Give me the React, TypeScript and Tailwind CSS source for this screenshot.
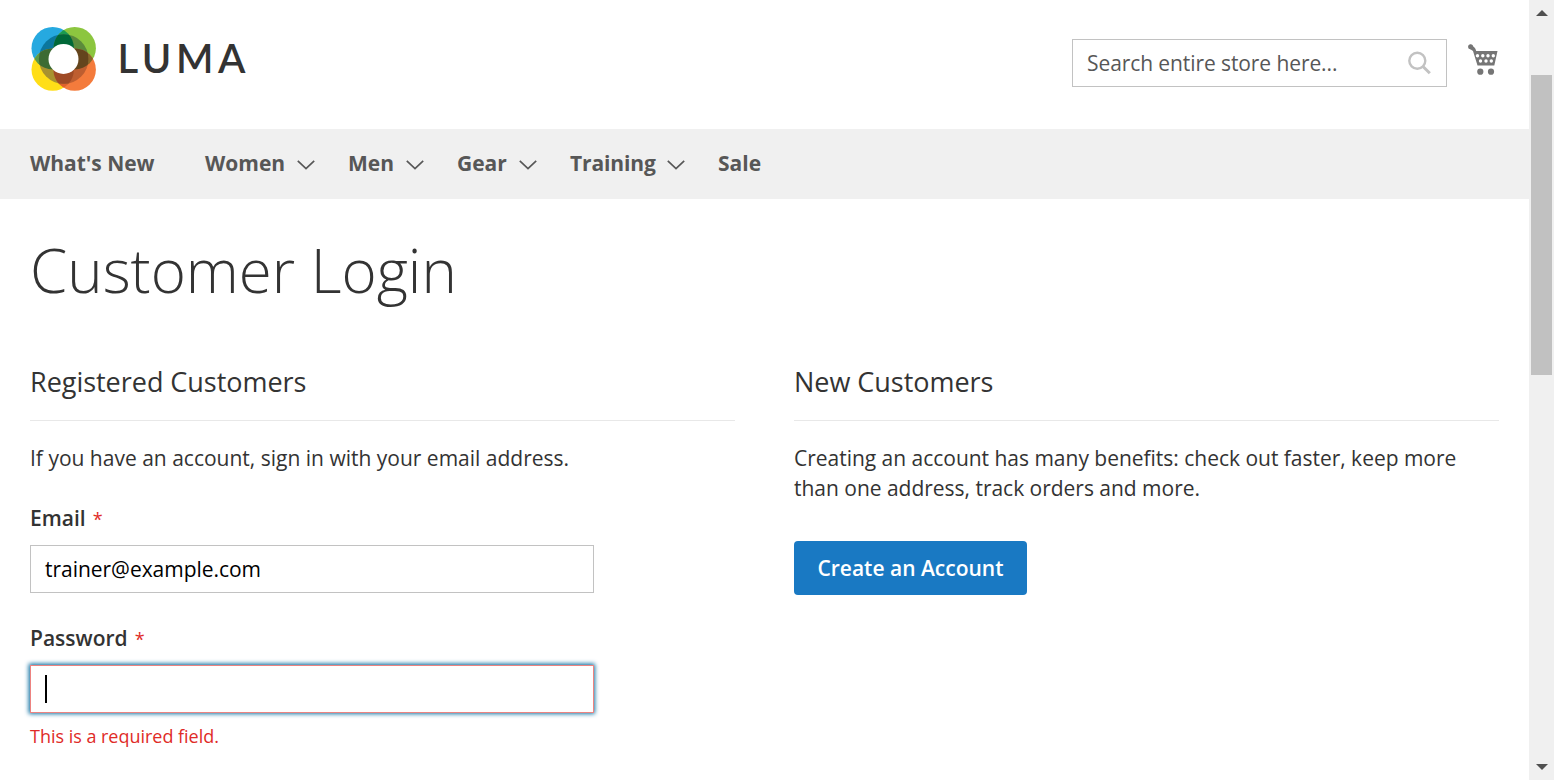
import React from "react";

const fontClass = "font-['Open_Sans','Liberation_Sans',sans-serif]";

function LumaMark() {
  return (
    <svg width="66" height="66" viewBox="0 0 66 66" className="block shrink-0" aria-hidden="true">
      <defs>
        <clipPath id="tl"><circle cx="22.7" cy="22.2" r="21.2" /></clipPath>
        <clipPath id="br"><circle cx="44.7" cy="43.6" r="21.2" /></clipPath>
        <clipPath id="ring"><circle cx="33.7" cy="33" r="24.8" /></clipPath>
      </defs>
      <circle cx="22.7" cy="22.2" r="21.2" fill="#26a9e0" />
      <circle cx="44.7" cy="22.2" r="21.2" fill="#8cc63f" />
      <circle cx="22.7" cy="43.6" r="21.2" fill="#ffde17" />
      <circle cx="44.7" cy="43.6" r="21.2" fill="#f47b3c" />
      <g clipPath="url(#tl)">
        <circle cx="44.7" cy="22.2" r="21.2" fill="#1a9a50" />
        <circle cx="22.7" cy="43.6" r="21.2" fill="#5a9a48" />
      </g>
      <g clipPath="url(#br)">
        <circle cx="44.7" cy="22.2" r="21.2" fill="#87672a" />
        <circle cx="22.7" cy="43.6" r="21.2" fill="#e0622b" />
      </g>
      <g clipPath="url(#ring)">
        <circle cx="22.7" cy="22.2" r="21.2" fill="#0b779d" />
        <circle cx="44.7" cy="22.2" r="21.2" fill="#5b8b3b" />
        <circle cx="22.7" cy="43.6" r="21.2" fill="#a8922f" />
        <circle cx="44.7" cy="43.6" r="21.2" fill="#be5e30" />
        <g clipPath="url(#tl)">
          <circle cx="44.7" cy="22.2" r="21.2" fill="#006838" />
          <circle cx="22.7" cy="43.6" r="21.2" fill="#3c6b33" />
        </g>
        <g clipPath="url(#br)">
          <circle cx="44.7" cy="22.2" r="21.2" fill="#64451d" />
          <circle cx="22.7" cy="43.6" r="21.2" fill="#9f4a25" />
        </g>
      </g>
      <circle cx="33.5" cy="33" r="15" fill="#fff" />
    </svg>
  );
}

function Chevron() {
  return (
    <svg width="18" height="10" viewBox="0 0 18 10" className="mt-[4px] ml-auto block" fill="none" stroke="#575757" strokeWidth="1.7" aria-hidden="true">
      <path d="M.8 .8 9 8.500l8.200-7.700" />
    </svg>
  );
}

function Cart() {
  return (
    <svg width="30" height="32" viewBox="0 0 30 32" className="ml-[21px] block" fill="#757575" aria-hidden="true">
      <circle cx="2.600" cy="2.800" r="2.500" />
      <path d="M2.500 .5 6 3Q7.700 4.500 8.200 7H29.500L26.300 21.500H9.500L5 7 2 5Z" />
      <g fill="#fff">
        <circle cx="9.500" cy="11.700" r="1.700" /><circle cx="14.800" cy="11.700" r="1.700" /><circle cx="20" cy="11.700" r="1.700" /><circle cx="25.300" cy="11.700" r="1.700" />
        <circle cx="12.500" cy="17" r="1.700" /><circle cx="18" cy="17" r="1.700" /><circle cx="23.300" cy="17" r="1.700" />
      </g>
      <circle cx="12.300" cy="27.700" r="3.100" /><circle cx="23" cy="27.700" r="3.100" />
    </svg>
  );
}

function NavItem({ label, className, menu }: { label: string; className: string; menu?: boolean }) {
  return (
    <a className={`flex shrink-0 items-center whitespace-nowrap ${className}`}>
      {label}
      {menu && <Chevron />}
    </a>
  );
}

export default function App() {
  return (
    <div className={`flex h-[780px] w-[1554px] overflow-hidden bg-white text-[21px] leading-[30px] text-[#333] ${fontClass}`}>
      <div className="w-[1529px] shrink-0">
        <header className="flex h-[129px] items-start px-[30px]">
          <a className="flex items-start pt-[26px]">
            <LumaMark />
            <span className="ml-[21.500px] font-['Lato',sans-serif] text-[40px] leading-[64px] font-semibold tracking-[4.600px]">LUMA</span>
          </a>
          <div className="mt-[39px] ml-auto flex h-[48px] w-[375px] items-center justify-between border border-[#c2c2c2] pr-[14px] pl-[14px]">
            <span className="tracking-[-0.090px] text-[#575757]">Search entire store here...</span>
            <svg width="24" height="24" viewBox="0 0 24 24" className="mb-[1px]" fill="none" stroke="#c2c2c2" strokeWidth="2.400" aria-hidden="true">
              <circle cx="9.300" cy="9.700" r="8" />
              <path d="m15 15.500 6.800 6.700" strokeWidth="3" />
            </svg>
          </div>
          <div className="mt-[44px] mr-[1px]"><Cart /></div>
        </header>

        <nav className="flex h-[70px] items-center bg-[#f0f0f0] pb-[2px] pl-[30px] font-bold text-[#575757]">
          <NavItem label="What's New" className="w-[175px] tracking-[-0.030px]" />
          <NavItem label="Women" className="mr-[33px] w-[110px]" menu />
          <NavItem label="Men" className="mr-[33px] w-[76px]" menu />
          <NavItem label="Gear" className="mr-[33px] w-[80px]" menu />
          <NavItem label="Training" className="mr-[33px] w-[115px] tracking-[-0.130px]" menu />
          <NavItem label="Sale" className="" />
        </nav>

        <main className="px-[30px]">
          <h1 className="pt-[38px] text-[60px] leading-[66px] font-light">Customer Login</h1>
          <div className="flex gap-[59px] pt-[61px]">
            <section className="w-[705px]">
              <h2 className="h-[57px] border-b border-[#e8e8e8] text-[27px] leading-[35px] tracking-[-0.030px]">Registered Customers</h2>
              <p className="mt-[22px]">If you have an account, sign in with your email address.</p>
              <label className="mt-[30px] block font-semibold">
                Email<span className="ml-[7px] text-[18px] font-normal text-[#e02b27]">*</span>
              </label>
              <div className="mt-[11px] flex h-[48px] w-[564px] items-center border border-[#c2c2c2] pl-[14px] tracking-[-0.030px] text-black">
                trainer@example.com
              </div>
              <label className="mt-[30px] block font-semibold">
                Password<span className="ml-[7px] text-[18px] font-normal text-[#e02b27]">*</span>
              </label>
              <div className="mt-[11px] flex h-[48px] w-[564px] items-center border border-[#ed8380] pl-[14px] shadow-[0_0_4.500px_1.200px_#00699d]">
                <span className="h-[28px] w-[2px] bg-black" />
              </div>
              <p className="mt-[10px] text-[18px] leading-[27px] tracking-[-0.020px] text-[#e02b27]">This is a required field.</p>
            </section>
            <section className="w-[705px]">
              <h2 className="h-[57px] border-b border-[#e8e8e8] text-[27px] leading-[35px] tracking-[-0.030px]">New Customers</h2>
              <p className="mt-[22px] tracking-[-0.020px]">
                Creating an account has many benefits: check out faster, keep more<br />than one address, track orders and more.
              </p>
              <button className="mt-[38px] h-[54px] w-[233px] rounded-[4px] bg-[#1979c3] font-semibold text-white">Create an Account</button>
            </section>
          </div>
        </main>
      </div>

      <div className="flex w-[25px] flex-col items-center bg-[#f0f0f0]">
        <svg width="12" height="6" viewBox="0 0 12 6" className="mt-[10px]" fill="#505050" aria-hidden="true"><path d="M6 0 12 6H0Z" /></svg>
        <div className="mt-[59px] h-[300px] w-[21px] bg-[#c1c1c1]" />
        <svg width="12" height="6" viewBox="0 0 12 6" className="mt-auto mb-[10px]" fill="#505050" aria-hidden="true"><path d="M0 0H12L6 6Z" /></svg>
      </div>
    </div>
  );
}
